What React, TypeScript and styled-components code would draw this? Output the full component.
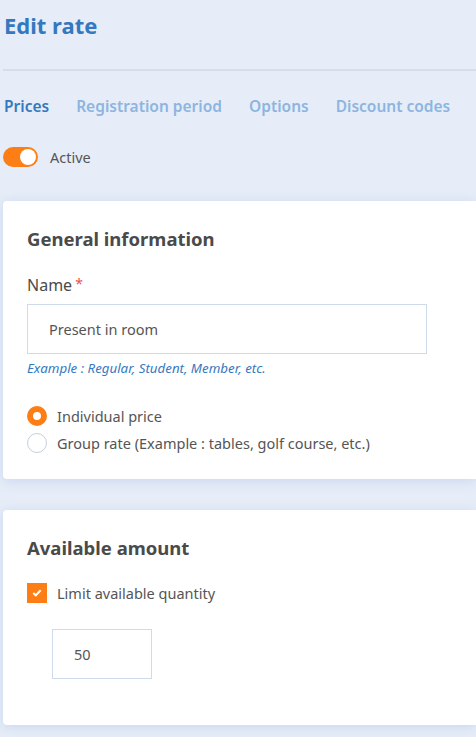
import React from "react";
import styled, { createGlobalStyle } from "styled-components";

const GlobalStyle = createGlobalStyle`
  html, body {
    margin: 0;
    padding: 0;
    background: #e6edf8;
    font-family: "Noto Sans", "Open Sans", sans-serif;
  }
`;

const Page = styled.div`
  width: 476px;
  min-height: 737px;
  padding: 0 0 0 3px;
  box-sizing: border-box;
  overflow: hidden;
  background: #e6edf8;
`;

const Title = styled.h1`
  margin: 0;
  padding: 10px 0 0 1px;
  height: 69px;
  box-sizing: border-box;
  font-size: 22px;
  font-weight: 700;
  color: #3479bf;
`;

const Divider = styled.div`
  height: 2px;
  background: #d5deeb;
`;

const Tabs = styled.nav`
  display: flex;
  gap: 27px;
  padding: 24px 0 0 1px;
  height: 76px;
  box-sizing: border-box;
`;

const Tab = styled.span<{ active?: boolean }>`
  font-size: 15.5px;
  font-weight: 600;
  white-space: nowrap;
  color: ${(p) => (p.active ? "#3479bf" : "#8db5e0")};
`;

const ActiveRow = styled.div`
  display: flex;
  align-items: center;
  gap: 12px;
  height: 20px;
  margin-bottom: 34px;
`;

const Toggle = styled.span`
  width: 35px;
  height: 20px;
  border-radius: 10px;
  background: #fd7e14;
  display: flex;
  align-items: center;
  justify-content: flex-end;
  padding: 0 2px;
  box-sizing: border-box;

  &::after {
    content: "";
    width: 16px;
    height: 16px;
    border-radius: 50%;
    background: #fff;
  }
`;

const Text = styled.span`
  font-size: 14.5px;
  color: #555;
`;

const Card = styled.section<{ h: number }>`
  background: #fff;
  border-radius: 4px 0 0 4px;
  box-shadow: 0 2px 12px rgba(120, 150, 210, 0.25);
  padding: 25px 0 0 24px;
  height: ${(p) => p.h}px;
  box-sizing: border-box;
  margin-bottom: 31px;
`;

const CardTitle = styled.h2`
  margin: 0 0 23px;
  font-size: 18.5px;
  font-weight: 700;
  color: #4a4a4a;
`;

const Label = styled.div`
  font-size: 16px;
  color: #4a4a4a;
  margin-bottom: 8px;
`;

const Star = styled.span`
  color: #e8544a;
  margin-left: 3px;
  font-size: 14px;
  vertical-align: top;
`;

const Input = styled.div<{ w: number }>`
  width: ${(p) => p.w}px;
  height: 50px;
  box-sizing: border-box;
  border: 1px solid #cfdbea;
  display: flex;
  align-items: center;
  padding-left: 21px;
  font-size: 14.5px;
  color: #555;
`;

const Help = styled.div`
  font-size: 13.3px;
  line-height: 17px;
  font-style: italic;
  color: #3479bf;
  margin: 6px 0 29px;
`;

const Choices = styled.div`
  display: flex;
  flex-direction: column;
  gap: 7px;
`;

const Choice = styled.div`
  display: flex;
  align-items: center;
  gap: 10px;
`;

const Radio = styled.span<{ on?: boolean }>`
  width: 20px;
  height: 20px;
  border-radius: 50%;
  box-sizing: border-box;
  border: ${(p) => (p.on ? "6px solid #fd7e14" : "1px solid #c5cfdc")};
  background: #fff;
`;

const Check = styled.span`
  width: 20px;
  height: 20px;
  background: #fd7e14;
  display: flex;
  align-items: center;
  justify-content: center;
`;

const QtyWrap = styled.div`
  padding: 26px 0 0 25px;
`;

export default function App() {
  return (
    <Page>
      <GlobalStyle />
      <Title>Edit rate</Title>
      <Divider />
      <Tabs>
        <Tab active>Prices</Tab>
        <Tab>Registration period</Tab>
        <Tab>Options</Tab>
        <Tab>Discount codes</Tab>
      </Tabs>
      <ActiveRow>
        <Toggle />
        <Text>Active</Text>
      </ActiveRow>

      <Card h={278}>
        <CardTitle>General information</CardTitle>
        <Label>
          Name<Star>*</Star>
        </Label>
        <Input w={400}>Present in room</Input>
        <Help>Example : Regular, Student, Member, etc.</Help>
        <Choices>
          <Choice>
            <Radio on />
            <Text>Individual price</Text>
          </Choice>
          <Choice>
            <Radio />
            <Text>Group rate (Example : tables, golf course, etc.)</Text>
          </Choice>
        </Choices>
      </Card>

      <Card h={215}>
        <CardTitle>Available amount</CardTitle>
        <Choice>
          <Check>
            <svg width="10" height="8" viewBox="0 0 10 8">
              <path d="M1.3 4 L3.8 6.3 L8.7 1.3" fill="none" stroke="#fff" strokeWidth="2" />
            </svg>
          </Check>
          <Text>Limit available quantity</Text>
        </Choice>
        <QtyWrap>
          <Input w={100}>50</Input>
        </QtyWrap>
      </Card>
    </Page>
  );
}
